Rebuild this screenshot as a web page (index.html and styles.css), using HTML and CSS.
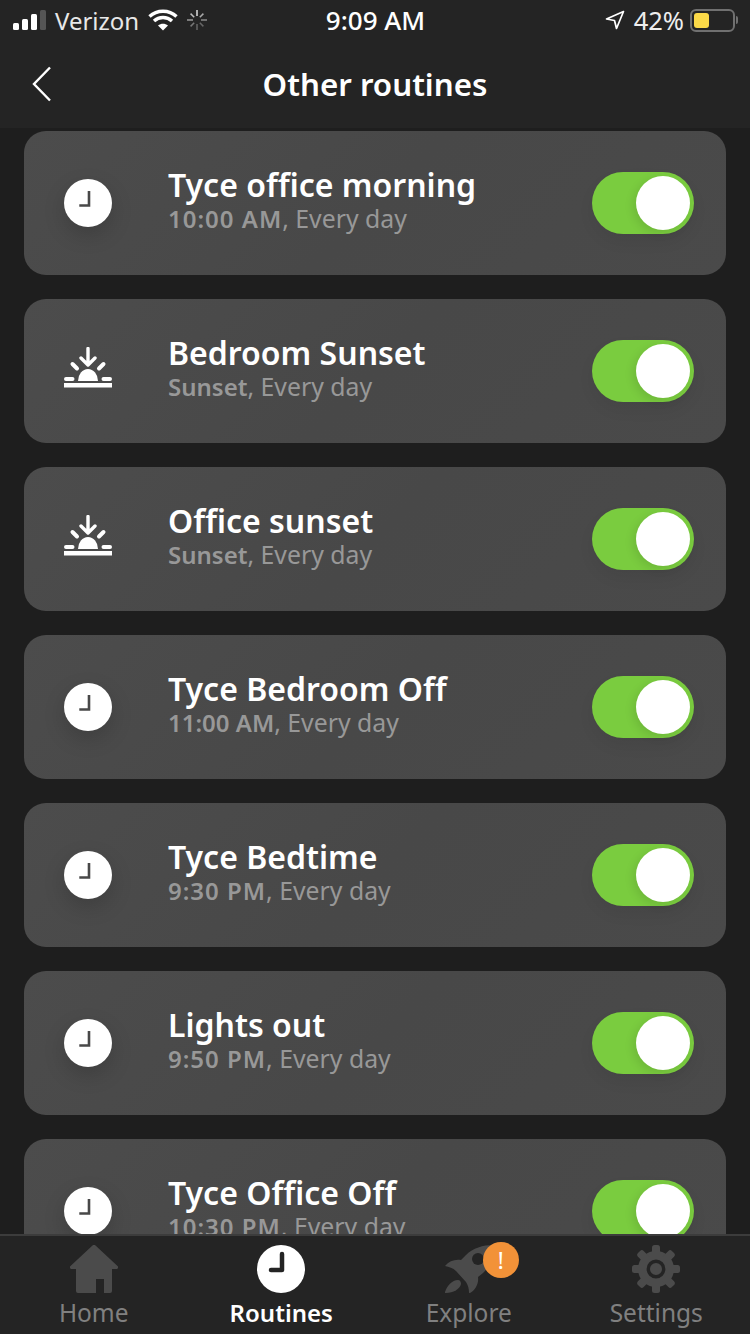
FILE: index.html
```html
<!DOCTYPE html>
<html lang="en">
<head>
<meta charset="utf-8">
<title>Other routines</title>
<link rel="stylesheet" href="styles.css">
</head>
<body>
<svg class="defs" width="0" height="0" aria-hidden="true">
  <symbol id="clock" viewBox="0 0 48 48">
    <circle cx="24" cy="24" r="24" fill="#fff"/>
    <path d="M25 12v14.500H15.300" fill="none" stroke="#484848" stroke-width="2.600"/>
  </symbol>
  <symbol id="sunset" viewBox="0 0 48 48">
    <path d="M0 38.200h48" stroke="#fff" stroke-width="4.400" fill="none"/>
    <path d="M14 34a10 12 0 0 1 20 0z" fill="#fff"/>
    <path d="M2 32h6.500M39.500 32H46M8.500 17l4.500 4.500M39.500 17L35 21.500" stroke="#fff" stroke-width="4" stroke-linecap="round" fill="none"/>
    <path d="M24 1.500v16M17 11l7 7 7-7" stroke="#fff" stroke-width="3.400" stroke-linecap="round" stroke-linejoin="round" fill="none"/>
  </symbol>
</svg>
<div class="app">
  <header class="top">
    <div class="status">
      <div class="status-left">
        <span class="signal"><i class="b1"></i><i class="b2"></i><i class="b3"></i><i class="b4"></i></span>
        <span class="carrier">Verizon</span>
        <svg class="wifi" width="30" height="22" viewBox="0 0 30 22"><path d="M1.500 7.500C9 .5 21 .5 28.500 7.500" fill="none" stroke="#fff" stroke-width="3.400"/><path d="M6 12c5-4.600 13-4.600 18 0" fill="none" stroke="#fff" stroke-width="3.400"/><path d="M10 16.500c3-2.500 7-2.500 10 0l-5 5z" fill="#fff"/></svg>
        <svg class="spin" width="20" height="20" viewBox="0 0 20 20" fill="none" stroke-width="1.500"><path d="M10 0v6" stroke="#ddd"/><path d="M16.400 3.600l-3.600 3.600" stroke="#aaa"/><path d="M20 10h-6" stroke="#888"/><path d="M16.400 16.400l-3.600-3.600" stroke="#666"/><path d="M10 20v-6" stroke="#666"/><path d="M3.600 16.400l3.600-3.600" stroke="#777"/><path d="M0 10h6" stroke="#999"/><path d="M3.600 3.600l3.600 3.600" stroke="#bbb"/></svg>
      </div>
      <div class="time">9:09 AM</div>
      <div class="status-right">
        <svg class="loc" width="20" height="20" viewBox="0 0 20 20"><path d="M18.500 1.500L1.500 9l8 1.500 2 8z" fill="none" stroke="#fff" stroke-width="1.700" stroke-linejoin="round"/></svg>
        <span class="pct">42%</span>
        <span class="battery"><span class="level"></span></span>
        <span class="nub"></span>
      </div>
    </div>
    <div class="nav">
      <svg class="back" width="20" height="36" viewBox="0 0 20 36"><path d="M18 1.500L2 18l16 16.500" fill="none" stroke="#fff" stroke-width="2.400"/></svg>
      <h1 class="title">Other routines</h1>
    </div>
  </header>

  <main class="list">
    <section class="card">
      <svg class="ico ico-clock" width="48" height="48"><use href="#clock"/></svg>
      <div class="text"><div class="name">Tyce office morning</div><div class="when"><b class="wide">10:00 AM</b>, Every day</div></div>
      <div class="toggle"><span class="knob"></span></div>
    </section>
    <section class="card">
      <svg class="ico" width="48" height="48"><use href="#sunset"/></svg>
      <div class="text"><div class="name">Bedroom Sunset</div><div class="when"><b>Sunset</b>, Every day</div></div>
      <div class="toggle"><span class="knob"></span></div>
    </section>
    <section class="card">
      <svg class="ico" width="48" height="48"><use href="#sunset"/></svg>
      <div class="text"><div class="name">Office sunset</div><div class="when"><b>Sunset</b>, Every day</div></div>
      <div class="toggle"><span class="knob"></span></div>
    </section>
    <section class="card">
      <svg class="ico ico-clock" width="48" height="48"><use href="#clock"/></svg>
      <div class="text"><div class="name">Tyce Bedroom Off</div><div class="when"><b>11:00 AM</b>, Every day</div></div>
      <div class="toggle"><span class="knob"></span></div>
    </section>
    <section class="card">
      <svg class="ico ico-clock" width="48" height="48"><use href="#clock"/></svg>
      <div class="text"><div class="name">Tyce Bedtime</div><div class="when"><b class="wide">9:30 PM</b>, Every day</div></div>
      <div class="toggle"><span class="knob"></span></div>
    </section>
    <section class="card">
      <svg class="ico ico-clock" width="48" height="48"><use href="#clock"/></svg>
      <div class="text"><div class="name">Lights out</div><div class="when"><b class="wide">9:50 PM</b>, Every day</div></div>
      <div class="toggle"><span class="knob"></span></div>
    </section>
    <section class="card">
      <svg class="ico ico-clock" width="48" height="48"><use href="#clock"/></svg>
      <div class="text"><div class="name">Tyce Office Off</div><div class="when"><b class="wide">10:30 PM</b>, Every day</div></div>
      <div class="toggle"><span class="knob"></span></div>
    </section>
  </main>

  <nav class="tabs">
    <div class="tab">
      <svg width="48" height="48" viewBox="0 0 48 48"><path d="M22.500.600a2 2 0 0 1 3 0L47.500 21a1.700 1.700 0 0 1-1 3H42v22a2 2 0 0 1-2 2h-6V34h-8v14H8a2 2 0 0 1-2-2V24H1.500a1.700 1.700 0 0 1-1-3z" fill="#4b4b4b"/></svg>
      <span>Home</span>
    </div>
    <div class="tab active">
      <svg width="48" height="48" viewBox="0 0 48 48"><circle cx="24" cy="24" r="24" fill="#fff"/><path d="M25 9v16H14" fill="none" stroke="#242424" stroke-width="4.500" stroke-linecap="round" stroke-linejoin="round"/></svg>
      <span>Routines</span>
    </div>
    <div class="tab">
      <span class="rocket">
        <svg width="48" height="48" viewBox="0 0 48 48"><path d="M48 0C38 0 28 3 21 10l-5 5C10 14 4 16 0 21c4 1 8 2 11 5l10 11c2 3 3 7 3 10.500 0 .5.500.5 1 .5 5-3 9-9 8-16l5-4C45 22 48 10 48 0z" fill="#4b4b4b"/><path d="M13 35c-6 0-11 6-13 12 0 1 0 1 1 1 7 0 14-4 15-9 0-2-1-4-3-4z" fill="#4b4b4b"/><circle cx="33" cy="14" r="6" fill="#242424"/></svg>
        <span class="badge">!</span>
      </span>
      <span>Explore</span>
    </div>
    <div class="tab">
      <svg width="48" height="48" viewBox="0 0 48 48"><g fill="#4b4b4b"><circle cx="24" cy="24" r="18"/><rect x="20" y="0" width="8" height="48" rx="2.500"/><rect x="20" y="0" width="8" height="48" rx="2.500" transform="rotate(45 24 24)"/><rect x="20" y="0" width="8" height="48" rx="2.500" transform="rotate(90 24 24)"/><rect x="20" y="0" width="8" height="48" rx="2.500" transform="rotate(135 24 24)"/></g><circle cx="24" cy="24" r="7.700" fill="none" stroke="#242424" stroke-width="3.400"/></svg>
      <span>Settings</span>
    </div>
  </nav>
</div>
</body>
</html>
```
FILE: styles.css
```css
* { box-sizing: border-box; }
html, body { margin: 0; padding: 0; background: #1e1e1e; }
body { font-family: "Noto Sans", "Open Sans", sans-serif; color: #fff; }
.defs { display: block; height: 0; }

.app { width: 750px; height: 1334px; display: flex; flex-direction: column; overflow: hidden; }

.top { background: #242424; height: 128px; flex: none; }
.status { height: 40px; display: grid; grid-template-columns: 1fr auto 1fr; align-items: center; padding: 0 12px 0 13px; font-size: 24px; }
.status-left { display: flex; align-items: center; }
.signal { display: flex; align-items: flex-end; gap: 3px; height: 20px; margin-top: -1px; }
.signal i { display: block; width: 6px; border-radius: 1.500px; background: #fff; }
.signal .b1 { height: 7px; }
.signal .b2 { height: 11px; }
.signal .b3 { height: 16px; }
.signal .b4 { height: 20px; background: #555; }
.carrier { margin-left: 9px; color: #e8e8e8; }
.wifi { margin-left: 9px; }
.spin { margin-left: 9px; }
.time { font-size: 26px; font-weight: 500; }
.status-right { display: flex; align-items: center; justify-content: flex-end; }
.loc { margin-right: 9px; }
.pct { font-size: 25.500px; margin-right: 6px; color: #eee; }
.battery { width: 45px; height: 23px; border: 2px solid #707070; border-radius: 6px; padding: 2px; display: block; }
.level { display: block; width: 15px; height: 15px; background: #fbd948; border-radius: 3px; }
.nub { width: 2px; height: 8px; background: #707070; margin-left: 1px; border-radius: 0 2px 2px 0; }

.nav { height: 88px; display: grid; grid-template-columns: 1fr auto 1fr; align-items: center; padding: 0 32px; }
.back { display: block; }
.title { margin: 0; font-size: 31.300px; font-weight: 600; line-height: 40px; grid-column: 2; grid-row: 1; }

.list { flex: 1; min-height: 0; overflow: hidden; padding: 3px 24px 0; display: flex; flex-direction: column; gap: 24px; background: #1e1e1e; }
.card { flex: none; height: 144px; border-radius: 22px; background: linear-gradient(135deg, #4c4c4c 0%, #484848 50%, #4a4a4a 100%); display: flex; align-items: center; padding: 0 32px 0 40px; }
.ico { flex: none; display: block; width: 48px; }
.ico-clock { filter: drop-shadow(0 8px 10px rgba(0,0,0,.16)); }
.text { flex: 1; min-width: 0; margin-left: 56px; margin-top: -7px; }
.name { font-size: 32px; font-weight: 600; line-height: 37px; white-space: nowrap; }
.when { font-size: 24.800px; line-height: 30px; color: #989898; white-space: nowrap; }
.when b { font-size: 24px; font-weight: 600; }
.when b.wide { letter-spacing: 1px; }
.toggle { flex: none; width: 102px; height: 62px; border-radius: 31px; background: #7acc3f; padding: 4px; display: flex; justify-content: flex-end; box-shadow: 0 8px 16px rgba(0,0,0,.06); }
.knob { display: block; width: 54px; height: 54px; border-radius: 50%; background: #fff; box-shadow: -3px 3px 10px rgba(0,0,0,.1); }

.tabs { flex: none; height: 100px; background: #242424; border-top: 2px solid #3c3c3c; display: grid; grid-template-columns: repeat(4, 1fr); padding: 9px 0 0; }
.tab { display: flex; flex-direction: column; align-items: center; font-size: 24.500px; line-height: 30px; color: #808080; }
.tab svg { display: block; }
.tab > span:last-child { margin-top: 5px; }
.tab.active { color: #fff; font-weight: 600; font-size: 24px; }
.rocket { position: relative; display: block; width: 48px; height: 48px; }
.badge { position: absolute; left: 38px; top: -3px; width: 36px; height: 36px; border-radius: 50%; background: #f29238; color: #fff; font-size: 24px; line-height: 36px; text-align: center; }
```
